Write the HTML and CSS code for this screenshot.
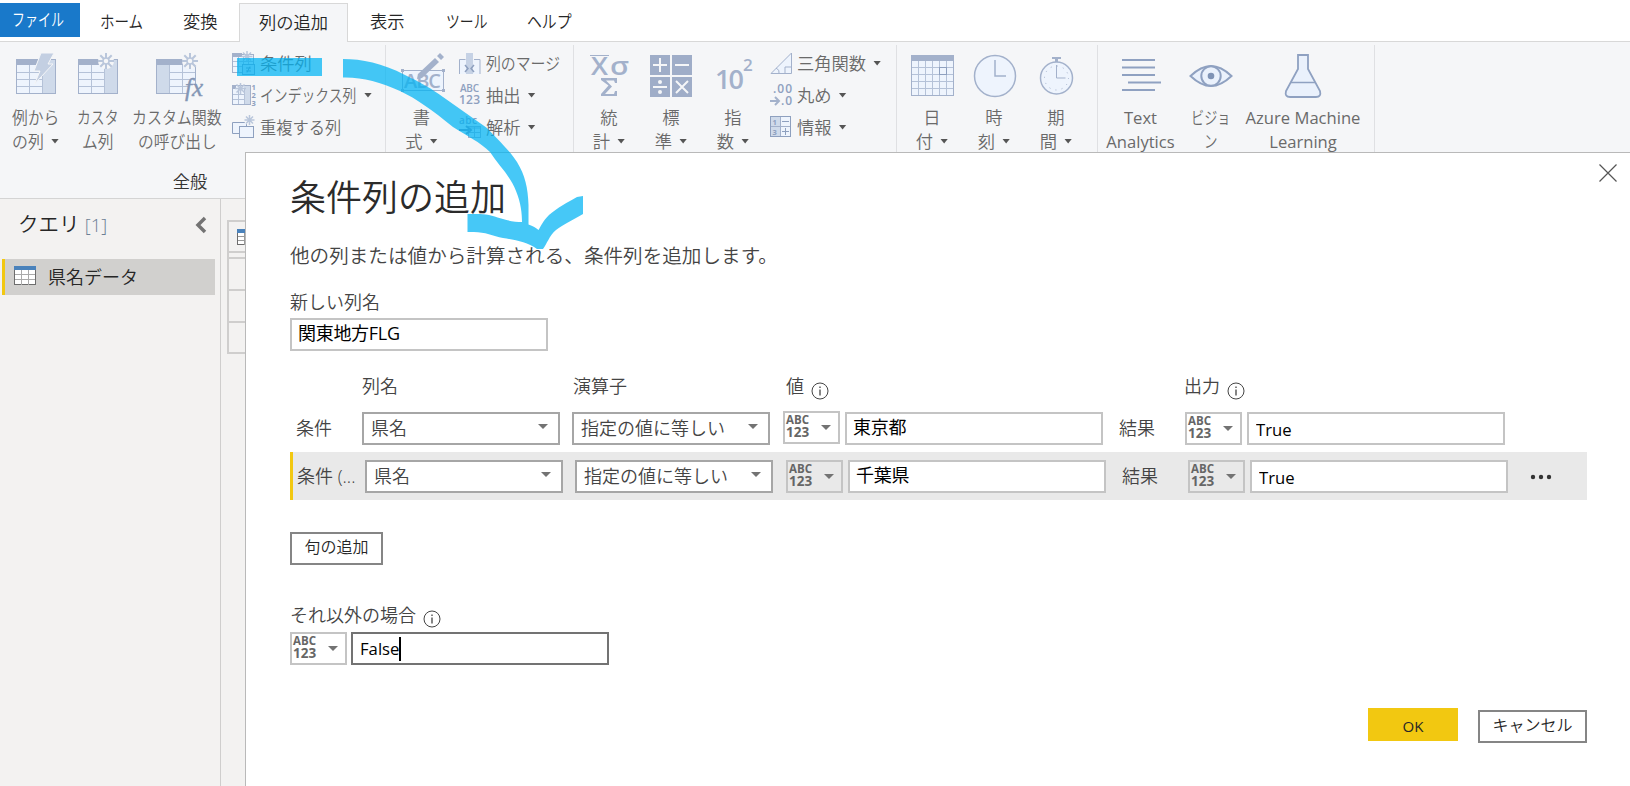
FILE: index.html
```html
<!DOCTYPE html>
<html lang="ja">
<head>
  <meta charset="UTF-8">
  <meta name="viewport" content="width=device-width, initial-scale=1.0">
  <title>Power Query エディター</title>
  <link rel="stylesheet" href="styles.css">
</head>
<body>
  <nav class="tabs">
    <a class="tab file"><span class="kana k-file">ファイル</span></a>
    <a class="tab t-home"><span class="kana k-home">ホーム</span></a>
    <a class="tab t-transform">変換</a>
    <a class="tab active">列の追加</a>
    <a class="tab t-view">表示</a>
    <a class="tab t-tool"><span class="kana k-tool">ツール</span></a>
    <a class="tab t-help"><span class="kana k-help">ヘルプ</span></a>
  </nav>

  <div class="ribbon">
    <section class="group g-general">
      <div class="items">
        <button class="big w71">
          <svg class="icon" width="42" height="44" viewBox="0 0 42 44">
            <rect x="1.5" y="7.5" width="39" height="34" fill="#eef4fd" stroke="#a3b1cb"/>
            <rect x="27" y="8" width="13" height="33" fill="#cfdaea"/>
            <rect x="1" y="7" width="27" height="6" fill="#a3b1cb"/>
            <path d="M2 20.5h25M2 27.5h25M2 34.5h25M14.5 13v28M27.5 13v28" stroke="#b5c2d8" fill="none"/>
            <path d="M26 1h13l-6 11h5L19.5 32l5.5-13h-6z" fill="#c3cfe2" stroke="#f5f6f8"/>
          </svg>
          <span class="l1"><span class="kana k-rei">例から</span></span>
          <span class="l2"><span class="kana k-retsu">の列</span><i class="caret"></i></span>
        </button>
        <button class="big w54">
          <svg class="icon" width="42" height="44" viewBox="0 0 42 44">
            <rect x="1.5" y="7.5" width="39" height="34" fill="#eef4fd" stroke="#a3b1cb"/>
            <rect x="27" y="8" width="13" height="33" fill="#cfdaea"/>
            <rect x="1" y="7" width="22" height="6" fill="#a3b1cb"/>
            <path d="M2 20.5h25M2 27.5h25M2 34.5h25M14.5 13v28M27.5 13v28" stroke="#b5c2d8" fill="none"/>
            <circle cx="29" cy="9" r="8" fill="#f5f6f8"/>
            <path d="M29 1v5M29 12v5M21 9h5M32 9h5M23.3 3.3l3.5 3.5M31.2 11.2l3.5 3.5M34.7 3.3l-3.5 3.5M26.8 11.2l-3.5 3.5" stroke="#b9c6db" stroke-width="2"/>
            <circle cx="29" cy="9" r="3" fill="none" stroke="#b9c6db" stroke-width="1.5"/>
          </svg>
          <span class="l1"><span class="kana k-kasuta">カスタ</span></span>
          <span class="l2"><span class="kana k-mu">ム列</span></span>
        </button>
        <button class="big w105">
          <svg class="icon" width="46" height="44" viewBox="0 0 46 44">
            <rect x="1.5" y="7.5" width="39" height="34" fill="#eef4fd" stroke="#a3b1cb"/>
            <rect x="2" y="13" width="12" height="28" fill="#cfdaea"/>
            <rect x="1" y="7" width="27" height="6" fill="#a3b1cb"/>
            <path d="M14 20.5h26M14 27.5h26M14 34.5h26M14.5 13v28M27.5 13v28" stroke="#b5c2d8" fill="none"/>
            <circle cx="35" cy="9" r="8" fill="#f5f6f8"/>
            <path d="M35 1v5M35 12v5M27 9h5M38 9h5M29.3 3.3l3.5 3.5M37.2 11.2l3.5 3.5M40.7 3.3l-3.5 3.5M32.8 11.2l-3.5 3.5" stroke="#b9c6db" stroke-width="2"/>
            <circle cx="35" cy="9" r="3" fill="none" stroke="#b9c6db" stroke-width="1.5"/>
            <rect x="33" y="32" width="12" height="12" fill="#f5f6f8"/>
            <text x="30" y="44" class="fx">fx</text>
          </svg>
          <span class="l1"><span class="kana k-kansu">カスタム関数</span></span>
          <span class="l2"><span class="kana k-yobi">の呼び出し</span></span>
        </button>
        <div class="small-col">
          <button class="small">
            <svg class="sicon" width="23" height="24" viewBox="0 0 23 24">
              <rect x=".5" y="3.5" width="21" height="18" fill="#eef4fd" stroke="#a3b1cb"/>
              <rect y="2" width="10" height="4" fill="#a3b1cb"/>
              <path d="M1 10.5h20M1 15.5h20M6.5 6v15M11.5 6v15M16.5 6v15" stroke="#b5c2d8"/>
              <path d="M15 0v11M9.5 5.5h11M11 1.5l8 8M19 1.5l-8 8" stroke="#b9c6db" stroke-width="1.5"/>
              <rect x="10.5" y="13.5" width="12" height="10" fill="#dce6f4" stroke="#8ea0bf"/>
              <path d="M14 17h5M14 20h5M18 15.5l-3 6" stroke="#7f93b5"/>
            </svg>
            <span>条件列</span>
          </button>
          <button class="small">
            <svg class="sicon" width="23" height="24" viewBox="0 0 23 24">
              <rect x=".5" y="2.5" width="18" height="19" fill="#eef4fd" stroke="#a3b1cb"/>
              <rect x="12" y="3" width="6" height="18" fill="#cfdaea"/>
              <rect y="2" width="4" height="4" fill="#a3b1cb"/>
              <path d="M1 11.5h12M1 16.5h12M6.5 6v15M12.5 6v15" stroke="#b5c2d8"/>
              <path d="M8.5 0v11M3 5.5h11M4.5 1.5l8 8M12.5 1.5l-8 8" stroke="#b9c6db" stroke-width="1.5"/>
              <text x="19.5" y="7" class="tiny">1</text><text x="19.5" y="15" class="tiny">2</text><text x="19.5" y="23" class="tiny">3</text>
            </svg>
            <span class="kana k-index">インデックス列</span><i class="caret"></i>
          </button>
          <button class="small">
            <svg class="sicon" width="23" height="24" viewBox="0 0 23 24">
              <path d="M.5 7.5h14v11H.5z" fill="#eef4fd" stroke="#8ea0bf"/>
              <rect x="7.5" y="11.5" width="14" height="11" fill="#eef4fd" stroke="#8ea0bf"/>
              <circle cx="17" cy="5" r="5" fill="#f5f6f8"/>
              <path d="M17.5 0v10M12.5 5h10M14 1.5l7 7M21 1.5l-7 7" stroke="#b9c6db" stroke-width="1.5"/>
            </svg>
            <span class="kana k-dup">重複する列</span>
          </button>
        </div>
      </div>
      <div class="group-label">全般</div>
    </section>

    <section class="group g-text">
      <div class="items">
        <button class="big w71">
          <svg class="icon" width="46" height="44" viewBox="0 0 46 44">
            <rect x="3.5" y="18.5" width="41" height="20" fill="#eef4fd" stroke="#a3b1cb"/>
            <text x="5" y="35.5" class="abc" textLength="37">ABC</text>
            <path d="M2 17h3v3H2zM43 17h3v3h-3zM2 37h3v3H2zM43 37h3v3h-3z" fill="#a3b1cb"/>
            <path d="M38 4l3-3 4 4-3 3zM36 6l4 4-17 16-5 1 1-5z" fill="#a3b1cb"/>
          </svg>
          <span class="l1">書</span>
          <span class="l2">式<i class="caret"></i></span>
        </button>
        <div class="small-col">
          <button class="small">
            <svg class="sicon" width="22" height="24" viewBox="0 0 22 24">
              <path d="M1 9h20v14H1z" fill="#eef4fd"/>
              <path d="M.5 23V8.5h6M21 23V8.5h-6" fill="none" stroke="#a3b1cb"/>
              <rect x="7" y="2" width="7" height="21" fill="#c6d2e5"/>
              <path d="M6 14l3 3.5L6 21M15 14l-3 3.5 3 3.5" fill="none" stroke="#8ea0bf" stroke-width="1.5"/>
            </svg>
            <span class="kana k-merge">列のマージ</span>
          </button>
          <button class="small">
            <svg class="sicon" width="22" height="24" viewBox="0 0 22 24">
              <text x="1" y="9" class="mini" textLength="19">ABC</text>
              <text x="0" y="21" class="mini num" textLength="21">123</text>
            </svg>
            <span>抽出</span><i class="caret"></i>
          </button>
          <button class="small">
            <svg class="sicon" width="22" height="24" viewBox="0 0 22 24">
              <rect x="9.5" y="11.5" width="12" height="11" fill="#eef4fd" stroke="#a3b1cb"/>
              <path d="M9 13h12M9 17.5h12M15.5 11v12" stroke="#a3b1cb"/>
              <text x="0" y="9" class="mini" textLength="18">abc</text>
              <path d="M0 15h10M7 11l5 4-5 4" fill="none" stroke="#7f93b5" stroke-width="2"/>
            </svg>
            <span>解析</span><i class="caret"></i>
          </button>
        </div>
      </div>
    </section>

    <section class="group g-number">
      <div class="items">
        <button class="big w62">
          <svg class="icon" width="42" height="44" viewBox="0 0 42 44">
            <path d="M2 3.5h19" stroke="#a3b1cb"/>
            <text x="3" y="22.5" class="sym" textLength="17" lengthAdjust="spacingAndGlyphs">X</text>
            <text x="22" y="22.5" class="sym" textLength="19" lengthAdjust="spacingAndGlyphs">σ</text>
            <path d="M13 26h16v5h-2l-1-2.5h-8l6 6-7 7.5h9l1-3h2v5H13v-2l7.5-8.5L13 28z" fill="#a3b1cb"/>
          </svg>
          <span class="l1">統</span>
          <span class="l2">計<i class="caret"></i></span>
        </button>
        <button class="big w62">
          <svg class="icon" width="42" height="44" viewBox="0 0 42 44">
            <path d="M0 3h20v20H0zM22 3h20v20H22zM0 25h20v20H0zM22 25h20v20H22z" fill="#9fadc8"/>
            <path d="M3 13h14M10 6v14M25 13h14M3 35h14M26 29l12 12M38 29L26 41" stroke="#f5f6f8" stroke-width="2"/>
            <circle cx="10" cy="30" r="2" fill="#f5f6f8"/><circle cx="10" cy="40" r="2" fill="#f5f6f8"/>
          </svg>
          <span class="l1">標</span>
          <span class="l2">準<i class="caret"></i></span>
        </button>
        <button class="big w62">
          <svg class="icon" width="42" height="44" viewBox="0 0 42 44">
            <text x="3" y="37" class="ten" textLength="29">10</text>
            <text x="31" y="19" class="sup">2</text>
          </svg>
          <span class="l1">指</span>
          <span class="l2">数<i class="caret"></i></span>
        </button>
        <div class="small-col">
          <button class="small">
            <svg class="sicon" width="22" height="24" viewBox="0 0 22 24">
              <path d="M1 22.5L21.5 2v20.5z" fill="#eef4fd" stroke="#a3b1cb"/>
              <path d="M15 22v-6h6M6 17q4 2 3 5" fill="none" stroke="#a3b1cb"/>
            </svg>
            <span>三角関数</span><i class="caret"></i>
          </button>
          <button class="small">
            <svg class="sicon" width="22" height="24" viewBox="0 0 22 24">
              <text x="3" y="10" class="mini num" textLength="19">.00</text>
              <text x="11" y="22" class="mini num" textLength="11">.0</text>
              <path d="M0 18h8M5 14l4 4-4 4" fill="none" stroke="#a3b1cb" stroke-width="2"/>
            </svg>
            <span>丸め</span><i class="caret"></i>
          </button>
          <button class="small">
            <svg class="sicon" width="22" height="24" viewBox="0 0 22 24">
              <rect x=".5" y="1.5" width="20" height="20" fill="#eef4fd" stroke="#8ea0bf"/>
              <path d="M1 2h9v19H1z" fill="#cfdaea"/>
              <path d="M10.5 2v19M1 11.5h19" stroke="#a3b1cb"/>
              <path d="M12 6.5h7M12 16.5h7M15.5 13v7" stroke="#8ea0bf"/>
              <text x="2.5" y="9.5" class="tiny">1</text><text x="2.5" y="19.5" class="tiny">3</text>
            </svg>
            <span>情報</span><i class="caret"></i>
          </button>
        </div>
      </div>
    </section>

    <section class="group g-date">
      <div class="items">
        <button class="big w62">
          <svg class="icon" width="44" height="44" viewBox="0 0 44 44">
            <rect x="1.5" y="3.5" width="42" height="40" fill="#eef4fd" stroke="#a3b1cb"/>
            <rect x="1" y="3" width="43" height="6" fill="#a3b1cb"/>
            <path d="M2 15.5h41M2 22.5h41M2 29.5h41M2 36.5h41M8.5 9v34M15.5 9v34M22.5 9v34M29.5 9v34M36.5 9v34" stroke="#b5c2d8"/>
            <rect x="29.5" y="15.5" width="7" height="7" fill="none" stroke="#8ea0bf"/>
          </svg>
          <span class="l1">日</span>
          <span class="l2">付<i class="caret"></i></span>
        </button>
        <button class="big w62">
          <svg class="icon" width="44" height="44" viewBox="0 0 44 44">
            <circle cx="23" cy="24" r="20.5" fill="#eef4fd" stroke="#a3b1cb" stroke-width="1.5"/>
            <path d="M23 8v16h11" fill="none" stroke="#a3b1cb" stroke-width="1.5"/>
          </svg>
          <span class="l1">時</span>
          <span class="l2">刻<i class="caret"></i></span>
        </button>
        <button class="big w62">
          <svg class="icon" width="44" height="44" viewBox="0 0 44 44">
            <circle cx="22.5" cy="26" r="16" fill="#eef4fd" stroke="#a3b1cb" stroke-width="1.5"/>
            <circle cx="22.5" cy="26" r="12" fill="none" stroke="#a3b1cb" stroke-dasharray="1 5.28"/>
            <path d="M18 5h9v2h-3v3h-3V7h-3z" fill="#a3b1cb"/>
            <path d="M22.5 13v13h9" fill="none" stroke="#a3b1cb"/>
          </svg>
          <span class="l1">期</span>
          <span class="l2">間<i class="caret"></i></span>
        </button>
      </div>
    </section>

    <section class="group g-ai">
      <div class="items">
        <button class="big en w71">
          <svg class="icon" width="42" height="44" viewBox="0 0 42 44">
            <path d="M2 8h33M2 15.5h33M2 23h33M8 30.5h33M2 38h33" stroke="#8fa1c1" stroke-width="1.8"/>
          </svg>
          <span class="l1">Text</span>
          <span class="l2">Analytics</span>
        </button>
        <button class="big w70">
          <svg class="icon" width="44" height="44" viewBox="0 0 44 44">
            <path d="M1.5 24Q12 14 22 14t20.5 10Q32 34 22 34T1.5 24z" fill="#eaf1fc" stroke="#8fa1c1" stroke-width="2"/>
            <circle cx="22" cy="24" r="9.7" fill="#eaf1fc" stroke="#8fa1c1" stroke-width="2"/>
            <circle cx="22" cy="24" r="3.3" fill="#7f93b5"/>
          </svg>
          <span class="l1"><span class="kana k-vision">ビジョ</span></span>
          <span class="l2"><span class="kana k-n">ン</span></span>
        </button>
        <button class="big en w114">
          <svg class="icon" width="44" height="44" viewBox="0 0 44 44">
            <path d="M17 3h10v14l12 22q1.5 6-4 6H9q-5.5 0-4-6l12-22z" fill="#eaf1fc" stroke="#8fa1c1" stroke-width="1.8"/>
            <path d="M10 30.5h24" stroke="#8fa1c1" stroke-width="1.5"/>
          </svg>
          <span class="l1">Azure Machine</span>
          <span class="l2">Learning</span>
        </button>
      </div>
    </section>
  </div>

  <div class="workspace">
    <aside class="queries">
      <div class="queries-head">
        <span>クエリ <span class="count">[1]</span></span>
        <svg width="12" height="18" viewBox="0 0 12 18"><path d="M10 2L3 9l7 7" fill="none" stroke="#737373" stroke-width="3.5"/></svg>
      </div>
      <div class="query">
        <svg width="22" height="20" viewBox="0 0 22 20">
          <rect x=".5" y=".5" width="21" height="18" fill="#fff" stroke="#6d6d6d"/>
          <path d="M1 8.5h20M1 13.5h20M7.5 4v15M14.5 4v15" stroke="#aaa"/>
          <rect width="22" height="4" fill="#4a82bb"/>
        </svg>
        <span>県名データ</span>
      </div>
    </aside>
    <div class="preview">
      <div class="cell head">
        <svg width="22" height="17" viewBox="0 0 22 17">
          <rect x=".5" y=".5" width="21" height="15" fill="#fff" stroke="#6d6d6d"/>
          <path d="M1 7.5h20M1 11.5h20M7.5 4v12" stroke="#999"/>
          <rect width="22" height="4" fill="#4a82bb"/>
        </svg>
      </div>
      <div class="cell thin"></div>
      <div class="cell"></div>
      <div class="cell"></div>
      <div class="cell"></div>
    </div>
  </div>

  <div class="dialog">
    <svg class="close" width="18" height="18" viewBox="0 0 18 18"><path d="M.5 .5l17 17M17.5 .5l-17 17" stroke="#555" stroke-width="1.2"/></svg>
    <h1>条件列の追加</h1>
    <p class="desc">他の列または値から計算される、条件列を追加します。</p>

    <label class="label">新しい列名</label>
    <input class="field" type="text" value="関東地方FLG">

    <div class="head-row">
      <span class="h-col">列名</span>
      <span class="h-op">演算子</span>
      <span class="h-val">値<svg class="info" width="18" height="18" viewBox="0 0 18 18"><circle cx="9" cy="9" r="8" fill="none" stroke="#444"/><path d="M9 7.5v6M9 4.5v1.5" stroke="#444" stroke-width="1.3"/></svg></span>
      <span class="h-out">出力<svg class="info" width="18" height="18" viewBox="0 0 18 18"><circle cx="9" cy="9" r="8" fill="none" stroke="#444"/><path d="M9 7.5v6M9 4.5v1.5" stroke="#444" stroke-width="1.3"/></svg></span>
    </div>

    <div class="cond">
      <span class="name">条件</span>
      <div class="select">県名<i class="caret"></i></div>
      <div class="select op">指定の値に等しい<i class="caret"></i></div>
      <div class="type up"><span class="abc123"><b>ABC</b><b>123</b></span><i class="caret"></i></div>
      <input class="field" type="text" value="東京都">
      <span class="then">結果</span>
      <div class="type"><span class="abc123"><b>ABC</b><b>123</b></span><i class="caret"></i></div>
      <input class="field latin" type="text" value="True">
    </div>
    <div class="cond selected">
      <span class="name">条件 (...</span>
      <div class="select">県名<i class="caret"></i></div>
      <div class="select op">指定の値に等しい<i class="caret"></i></div>
      <div class="type"><span class="abc123"><b>ABC</b><b>123</b></span><i class="caret"></i></div>
      <input class="field" type="text" value="千葉県">
      <span class="then">結果</span>
      <div class="type"><span class="abc123"><b>ABC</b><b>123</b></span><i class="caret"></i></div>
      <input class="field latin" type="text" value="True">
      <svg class="more" width="22" height="6" viewBox="0 0 22 6"><g fill="#333"><circle cx="3" cy="3" r="2.2"/><circle cx="11" cy="3" r="2.2"/><circle cx="19" cy="3" r="2.2"/></g></svg>
    </div>

    <button class="btn add">句の追加</button>

    <label class="label else-label">それ以外の場合<svg class="info" width="18" height="18" viewBox="0 0 18 18"><circle cx="9" cy="9" r="8" fill="none" stroke="#444"/><path d="M9 7.5v6M9 4.5v1.5" stroke="#444" stroke-width="1.3"/></svg></label>
    <div class="else">
      <div class="type"><span class="abc123"><b>ABC</b><b>123</b></span><i class="caret"></i></div>
      <div class="field latin focus">False<i class="cursor"></i></div>
    </div>

    <div class="actions">
      <button class="btn ok">OK</button>
      <button class="btn cancel">キャンセル</button>
    </div>
  </div>

  <!-- marker and hand-drawn arrow -->
  <svg class="annotation" width="1630" height="786" viewBox="0 0 1630 786">
    <path d="M237 58H322V76H237z"/>
    <path d="M343 59C362 59 382 63 405 75C420 82 432 89 443 97L487 128C502 144 510 151 517 162C525 175 528 188 528.5 205V224.5C533 226 536 228 538.5 230C541 226 543 221 549 215C557 208 568 202 577 197L583 196V214C574 219 563 225 556 230C549 236 547 244 543 249H537C527 242 516 240 503 238C493 236 485 232 474 232H467.5V214H480C488 214 496 217 503 219C509 221 516 222 522 222C522 214 521 203 516 191C510 175 498 165 490 152C480 142 467 136 453 127C432 110 417 99 400 91C380 82 362 77 343 77.5z"/>
  </svg>
</body>
</html>
```
FILE: styles.css
```css
* {
  box-sizing: border-box;
}

body {
  margin: 0;
  width: 1630px;
  height: 786px;
  overflow: hidden;
  position: relative;
  font-family: "Open Sans", "Noto Sans CJK JP", sans-serif;
  font-size: 17.3px;
  font-weight: 350;
  color: #262626;
  background: #fff;
}

button {
  font: inherit;
  color: inherit;
  background: none;
  border: none;
  padding: 0;
}

svg {
  display: block;
  flex: none;
}

span {
  white-space: nowrap;
}

/* condensed kana, as in the UI fonts */
.kana {
  display: inline-block;
  flex: none;
  text-align: left;
  transform-origin: 0 50%;
}

.k-file { width: 51px; transform: scaleX(0.75); }
.k-home { width: 43px; transform: scaleX(0.84); }
.k-tool { width: 41px; transform: scaleX(0.8); }
.k-help { width: 44px; transform: scaleX(0.86); }
.k-rei { width: 47px; transform: scaleX(0.91); }
.k-retsu { width: 32px; transform: scaleX(0.92); }
.k-kasuta { width: 42px; transform: scaleX(0.8); }
.k-mu { width: 33px; transform: scaleX(0.91); }
.k-kansu { width: 91px; transform: scaleX(0.865); }
.k-yobi { width: 79px; transform: scaleX(0.91); }
.k-index { width: 97px; transform: scaleX(0.8); }
.k-dup { width: 81px; transform: scaleX(0.94); }
.k-merge { width: 74px; transform: scaleX(0.86); }
.k-vision { width: 40px; transform: scaleX(0.76); }
.k-n { width: 15px; transform: scaleX(0.78); }

/* tabs */
.tabs {
  display: flex;
  height: 42px;
  padding-top: 3px;
  border-bottom: 1px solid #d8d8d8;
}

.tab {
  height: 39px;
  line-height: 38px;
  white-space: nowrap;
}

.file {
  width: 80px;
  height: 34px;
  line-height: 34px;
  padding-left: 12px;
  background: #1979ca;
  color: #fff;
}

.t-home { width: 103px; padding-left: 20px; }
.t-transform { width: 56px; }
.t-view { width: 77px; padding-left: 21px; margin-left: 1px; }
.t-tool { width: 80px; padding-left: 20px; }
.t-help { padding-left: 21px; }

.active {
  width: 109px;
  padding-left: 19px;
  background: #f5f6f8;
  border: 1px solid #d8d8d8;
  border-bottom: none;
}

/* ribbon */
.ribbon {
  display: flex;
  height: 157px;
  padding-top: 3px;
  background: #f5f6f8;
  border-bottom: 1px solid #d4d4d4;
  color: #6a6a6a;
}

.group {
  display: flex;
  flex-direction: column;
  height: 152px;
  border-right: 1px solid #dfe0e3;
}

.g-general { width: 386px; }
.g-text { width: 188px; }
.g-number { width: 323px; padding-left: 4px; }
.g-date { width: 201px; padding-left: 4px; }
.g-ai { width: 277px; padding-left: 7px; }

.items {
  display: flex;
  height: 124px;
}

.group-label {
  width: 380px;
  text-align: center;
  line-height: 25px;
  color: #333;
}

.big {
  display: flex;
  flex: none;
  flex-direction: column;
  align-items: center;
  height: 110px;
  padding-top: 7px;
}

.en {
  font-size: 16.6px;
  font-weight: 400;
}

.w54 { width: 54px; }
.w62 { width: 62px; }
.w70 { width: 70px; }
.w71 { width: 71px; }
.w105 { width: 105px; }
.w114 { width: 114px; }

.icon {
  margin-bottom: 9px;
  overflow: visible;
}

.l1,
.l2 {
  height: 24px;
  line-height: 25px;
}

.l2 {
  display: flex;
  align-items: center;
}

.caret {
  display: inline-block;
  flex: none;
  width: 8px;
  height: 5px;
  margin-left: 7px;
  background: #555;
  clip-path: polygon(0 0, 100% 0, 50% 100%);
}

.small-col {
  padding: 2px 0 0 2px;
}

.small {
  display: flex;
  align-items: center;
  height: 32px;
}

.small span {
  margin-top: -2px;
}

.sicon {
  margin-right: 5px;
  overflow: visible;
}

.g-number .small-col { padding-left: 6px; }
.g-number .sicon { margin-right: 5px; }

.fx { font: italic 25px "Liberation Serif", serif; fill: #8496b5; stroke: #8496b5; stroke-width: 0.4; }
.tiny { font: 700 7.5px "Open Sans", sans-serif; fill: #8ea0bf; }
.mini { font: 600 10px "Open Sans", sans-serif; fill: #8ea0bf; }
.num { font-size: 12px; }
.abc { font: 600 20px "Open Sans", sans-serif; fill: #a3b1cb; }
.sym { font: 600 25px "Open Sans", sans-serif; fill: #a3b1cb; }
.ten { font: 600 27px "Open Sans", sans-serif; fill: #a3b1cb; }
.sup { font: 600 17px "Open Sans", sans-serif; fill: #a3b1cb; }

/* workspace */
.workspace {
  display: flex;
  height: 587px;
  background: #f3f2f1;
}

.queries {
  width: 221px;
  border-right: 1px solid #cfcecd;
}

.queries-head {
  display: flex;
  justify-content: space-between;
  align-items: center;
  height: 52px;
  padding: 0 13px 0 18px;
  font-size: 20.5px;
}

.queries-head > span {
  margin-top: -4px;
}

.count {
  color: #6c7f94;
  font-size: 18.5px;
}

.query {
  display: flex;
  align-items: center;
  gap: 12px;
  width: 213px;
  height: 36px;
  margin: 8px 0 0 2px;
  padding: 0 0 2px 9px;
  border-left: 3px solid #f2c811;
  background: #d1d0ce;
  font-size: 18px;
}

.query span {
  margin-top: -1px;
}

.preview {
  width: 30px;
  margin: 21px 0 0 6px;
}

.cell {
  height: 32px;
  border: 2px solid #cfcecd;
  border-bottom: none;
}

.head {
  height: 31px;
  padding: 7px 0 0 8px;
}

.thin {
  height: 6px;
}

.cell:last-child {
  height: 33px;
  border-bottom: 2px solid #cfcecd;
}

/* dialog */
.dialog {
  position: absolute;
  left: 245px;
  top: 152px;
  width: 1385px;
  height: 634px;
  padding-left: 44px;
  border: 1px solid #b9b9b9;
  border-right: none;
  border-bottom: none;
  background: #fff;
  color: #444;
  font-size: 18px;
}

.close {
  position: absolute;
  top: 11px;
  right: 13px;
}

h1 {
  margin: 18px 0 0;
  height: 54px;
  line-height: 54px;
  font-size: 36px;
  font-weight: 350;
  color: #2b2b2b;
}

.desc {
  margin: 17px 0 0;
  height: 28px;
  line-height: 28px;
  font-size: 19.6px;
}

.label {
  display: flex;
  align-items: flex-start;
  height: 30px;
  margin-top: 19px;
  line-height: 26px;
}

.field {
  display: block;
  width: 258px;
  height: 33px;
  padding: 0 0 5px 6px;
  border: 2px solid #c4c4c4;
  background: #fff;
  font: inherit;
  font-weight: 400;
  letter-spacing: -0.3px;
  color: #000;
  outline: none;
}

.label + .field {
  margin-top: -1px;
}

.latin {
  padding: 1px 0 0 7px;
  font-size: 16.7px;
  letter-spacing: 0;
}

.head-row {
  display: flex;
  height: 30px;
  margin-top: 21px;
  padding-left: 72px;
  line-height: 29px;
}

.head-row span {
  display: flex;
}

.h-col { width: 211px; }
.h-op { width: 213px; }
.h-val { width: 398px; }

.info {
  margin: 10px 0 0 7px;
}

.else-label .info {
  margin-top: 8px;
}

.cond {
  display: flex;
  align-items: center;
  width: 1297px;
  height: 50px;
  padding-top: 3px;
}

.name {
  width: 72px;
  padding: 0 0 3px 6px;
}

.select {
  display: flex;
  justify-content: space-between;
  align-items: center;
  width: 198px;
  height: 33px;
  padding: 0 10px 4px 7px;
  border: 2px solid #a6a6a6;
  background: #fff;
}

.op {
  margin: 0 13px 0 12px;
}

.type {
  display: flex;
  align-items: center;
  width: 57px;
  height: 33px;
  margin-right: 5px;
  padding-left: 1px;
  border: 2px solid #c4c4c4;
}

.up {
  position: relative;
  top: -1px;
}

.abc123 {
  display: flex;
  flex-direction: column;
  width: 27px;
  margin-top: -3px;
  font-family: "Open Sans", sans-serif;
  font-size: 11.5px;
  line-height: 13px;
  color: #666;
}

.abc123 b {
  height: 13px;
  font-weight: 700;
}

.abc123 b:last-child {
  font-size: 13.5px;
}

.type .caret {
  width: 10px;
  margin-left: 8px;
}

.select .caret {
  width: 10px;
}

.type .caret,
.select .caret {
  background: #737373;
}

.then {
  width: 82px;
  padding: 0 0 3px 16px;
}

.selected {
  height: 48px;
  padding-top: 1px;
  border-left: 3px solid #f2c811;
  background: #e9e9e9;
}

.selected .name {
  padding-left: 4px;
}

.more {
  margin-left: 22px;
}

.btn {
  display: block;
  height: 33px;
  padding-bottom: 5px;
  border: 2px solid #858585;
  font-size: 16px;
  color: #262626;
}

.add {
  width: 93px;
  margin-top: 32px;
}

.else-label {
  margin-top: 37px;
}

.else {
  display: flex;
}

.else .type {
  margin-right: 4px;
}

.focus {
  display: flex;
  align-items: center;
  padding-top: 0;
  border-color: #737373;
}

.cursor {
  width: 2px;
  height: 24px;
  background: #000;
}

.actions {
  display: flex;
  justify-content: flex-end;
  gap: 20px;
  margin-top: 43px;
  padding-right: 43px;
}

.ok {
  width: 90px;
  padding: 2px 0 0;
  border: none;
  font-size: 15px;
  font-weight: 400;
  background: #f2c811;
}

.cancel {
  width: 109px;
  margin-top: 2px;
}

.annotation {
  position: absolute;
  left: 0;
  top: 0;
  fill: #00b4f4;
  opacity: 0.72;
  pointer-events: none;
}
```
